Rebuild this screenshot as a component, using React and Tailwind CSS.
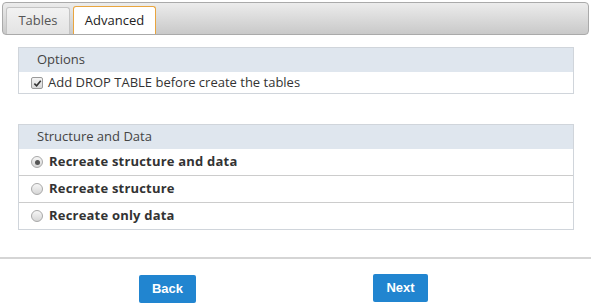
export default function App() {
  const rows = ['Recreate structure and data', 'Recreate structure', 'Recreate only data'];

  return (
    <div className="relative h-[306px] w-[591px] overflow-hidden bg-white font-['Open_Sans',sans-serif] text-[13px] text-[#333]">
      <div className="px-[2px] pt-[2px]">
        <div className="flex h-[33px] items-end gap-[3px] rounded-[4px] border border-[#aaa] bg-gradient-to-b from-[#ececec] to-[#c9c9c9] pl-[3px]">
          <div className="flex h-[27px] w-[64px] items-center justify-center rounded-t-[3px] border border-b-0 border-[#c4c4c4] bg-gradient-to-b from-[#f2f2f2] to-[#e3e3e3] text-[#555]">
            Tables
          </div>
          <div className="flex h-[28px] w-[83px] items-center justify-center rounded-t-[3px] border border-b-0 border-[#e9a53e] bg-white text-[#222]">
            Advanced
          </div>
        </div>
      </div>

      <div className="ml-[18px] mt-[12px] w-[556px] border border-[#d0d5db]">
        <div className="flex h-[24px] items-center bg-[#dfe6ee] pl-[18px] text-[#444]">Options</div>
        <label className="flex h-[21px] items-center gap-[5px] border-t border-white pl-[12px]">
          <span className="flex h-[12px] w-[12px] items-center justify-center rounded-[2px] border border-[#9a9a9a] bg-gradient-to-b from-[#f4f4f4] to-[#d8d8d8]">
            <svg viewBox="0 0 10 10" className="h-[9px] w-[9px]">
              <path d="M1.5 5.2 L4 7.6 L8.6 2" fill="none" stroke="#333" strokeWidth="1.8" />
            </svg>
          </span>
          <span>Add DROP TABLE before create the tables</span>
        </label>
      </div>

      <div className="ml-[18px] mt-[30px] w-[556px] border border-[#d0d5db]">
        <div className="flex h-[24px] items-center bg-[#dfe6ee] pl-[18px] text-[#444]">Structure and Data</div>
        {rows.map((t, i) => (
          <label
            key={t}
            className={`flex items-center gap-[6px] pl-[12px] font-bold tracking-[0.2px] text-[#333] ${i > 0 ? 'h-[27px] border-t border-[#ccc]' : 'h-[26px]'}`}
          >
            <span className="flex h-[12px] w-[12px] items-center justify-center rounded-full border border-[#a8a8a8] bg-gradient-to-b from-[#f6f6f6] to-[#d6d6d6]">
              {i === 0 && <span className="h-[5px] w-[5px] rounded-full bg-[#555]" />}
            </span>
            <span>{t}</span>
          </label>
        ))}
      </div>

      <div className="mt-[27px] h-[2px] w-full bg-[#d5d5d5]" />

      <div className="flex pt-[15px] font-['Liberation_Sans',sans-serif] text-[13px] font-bold text-white">
        <button className="ml-[139px] mt-[1px] h-[28px] w-[57px] rounded-[2px] bg-[#2185d0]">Back</button>
        <button className="ml-[177px] h-[28px] w-[55px] rounded-[2px] bg-[#2185d0]">Next</button>
      </div>
    </div>
  );
}
